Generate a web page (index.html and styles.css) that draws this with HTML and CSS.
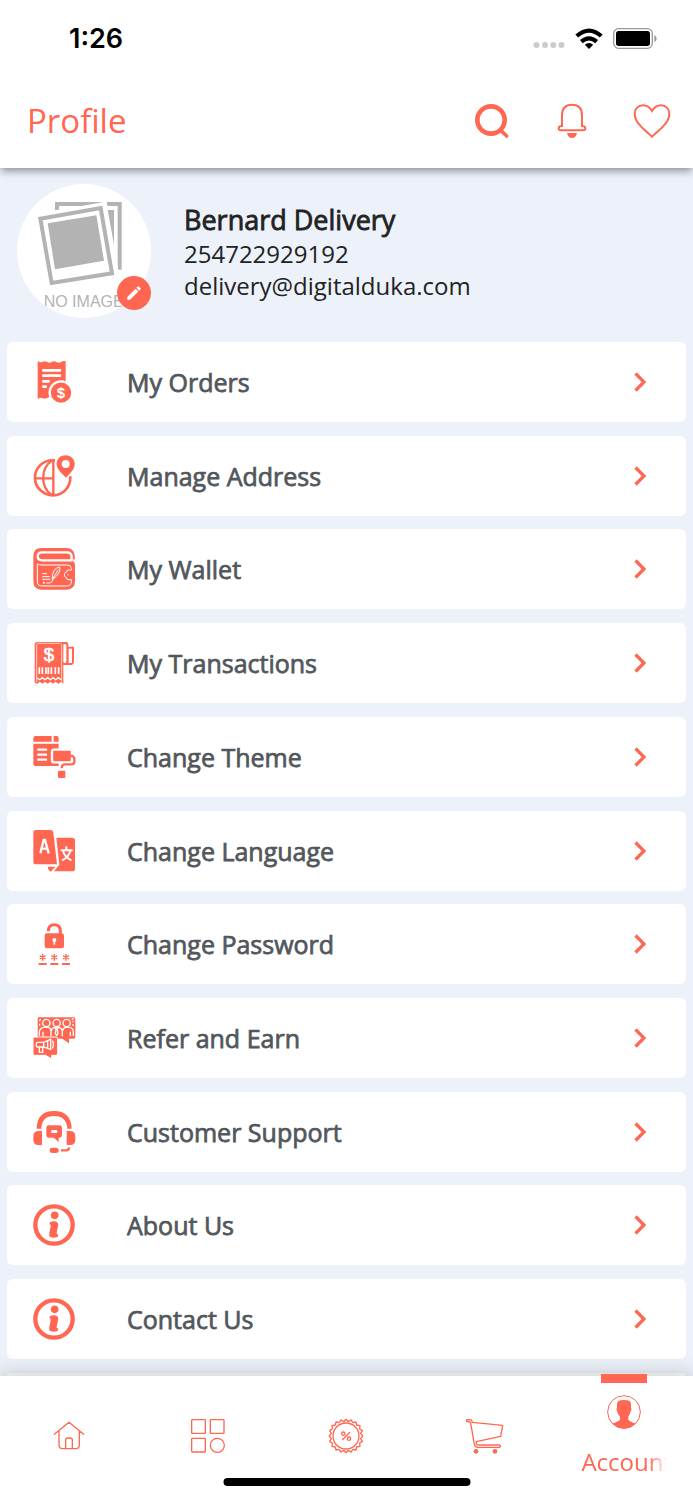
FILE: index.html
```html
<!DOCTYPE html>
<html lang="en">
<head>
  <meta charset="UTF-8" />
  <meta name="viewport" content="width=device-width, initial-scale=1.0" />
  <title>Profile</title>
  <link rel="stylesheet" href="styles.css">
</head>
<body>
  <svg class="defs" aria-hidden="true">
    <symbol id="chevron" viewBox="0 0 14 22">
      <path d="M2.5 2.5 L11 11 L2.5 19.5" fill="none" stroke="currentColor" stroke-width="3.2" />
    </symbol>
    <symbol id="info" viewBox="0 0 126 126">
      <circle cx="63" cy="63" r="56" fill="none" stroke="currentColor" stroke-width="13" />
      <circle cx="65" cy="34" r="11.5" fill="currentColor" />
      <path d="M51 54 Q66 49 74 56 Q77 59 75 67 L71 86 Q70 92 76 91 L74 99 Q60 104 52 99 Q47 96 49 88 L53 67 Q54 60 49 61 Z" fill="currentColor" />
    </symbol>
  </svg>

  <header class="top">
    <div class="status-bar">
      <span class="time">1:26</span>
      <div class="status-icons">
        <svg class="dots" viewBox="0 0 32 8"><g fill="#cbcbcb"><circle cx="3.5" cy="4" r="3" /><circle cx="12" cy="4" r="3" /><circle cx="20.300" cy="4" r="3" /><circle cx="28.500" cy="4" r="3" /></g></svg>
        <svg class="wifi" viewBox="0 0 78 60">
          <g fill="none" stroke="#000" stroke-width="12">
            <path d="M4 23 Q39 -8 74 23" />
            <path d="M17 39 Q39 20 61 39" />
          </g>
          <path d="M27 48 Q39 38 51 48 L39 60 Z" />
        </svg>
        <svg class="battery" viewBox="0 0 132 63">
          <rect x="2" y="2" width="116" height="59" rx="15" fill="none" stroke="#9a9a9a" stroke-width="4" />
          <rect x="9" y="9" width="102" height="45" rx="8" />
          <path d="M124 22 Q131 25 131 32 Q131 39 124 42 Z" fill="#9a9a9a" />
        </svg>
      </div>
    </div>
    <div class="app-bar">
      <h1>Profile</h1>
      <div class="actions">
        <button class="icon-btn" aria-label="Search">
          <svg viewBox="0 0 114 114"><g fill="none" stroke="currentColor"><circle cx="54" cy="54" r="41" stroke-width="14" /><path d="M82 84 L101 102" stroke-width="11" stroke-linecap="round" /></g></svg>
        </button>
        <button class="icon-btn" aria-label="Notifications">
          <svg viewBox="0 0 114 114"><path d="M27 72 V40 Q27 8 57 8 Q87 8 87 40 V72 Q97 72 97 79 Q97 85 90 85 H24 Q17 85 17 79 Q17 72 27 72 Z" fill="none" stroke="currentColor" stroke-width="6" /><path d="M42 93 H72 Q69 108 57 108 Q45 108 42 93 Z" fill="currentColor" /></svg>
        </button>
        <button class="icon-btn" aria-label="Favourites">
          <svg viewBox="0 0 114 114"><path d="M57 104 C40 88 5 64 5 36 C5 20 16 10 30 10 C43 10 51 17 57 27 C63 17 71 10 84 10 C98 10 109 20 109 36 C109 64 74 88 57 104 Z" fill="none" stroke="currentColor" stroke-width="6" /></svg>
        </button>
      </div>
    </div>
  </header>

  <main>
    <section class="user">
      <div class="avatar">
        <svg viewBox="0 0 402 402">
          <clipPath id="round"><circle cx="201" cy="201" r="201" /></clipPath>
          <g clip-path="url(#round)">
            <rect width="402" height="402" fill="#fff" />
            <path d="M120 78 V60 H308 V257" fill="none" stroke="#b3b3b3" stroke-width="12" />
            <path d="M63 97 L263 61 L299 271 L96 306 Z" fill="#fff" stroke="#fff" stroke-width="14" />
            <path d="M272 78 H291 V182 Z" fill="#b3b3b3" />
            <path d="M70 104 L251 72 L285 268 L104 297 Z" fill="#fff" stroke="#b3b3b3" stroke-width="12" />
            <path d="M92 118 L238 94 L261 230 L114 256 Z" fill="#b3b3b3" />
            <text x="80" y="369" class="no-image">NO IMAGE</text>
          </g>
        </svg>
        <button class="edit" aria-label="Edit photo">
          <svg viewBox="0 0 24 24"><path d="M3 17.250 V21 h3.750 L17.800 9.940 l-3.750-3.750 Z M20.700 7.040 a1 1 0 0 0 0-1.410 l-2.340-2.340 a1 1 0 0 0-1.410 0 l-1.830 1.830 3.750 3.750 Z" fill="#fff" /></svg>
        </button>
      </div>
      <div class="user-info">
        <h2>Bernard Delivery</h2>
        <p>254722929192</p>
        <p>delivery@digitalduka.com</p>
      </div>
    </section>

    <ul class="menu">
      <li><a href="#orders">
        <svg class="icon" viewBox="0 0 126 126">
          <path d="M14 0 Q21 6 28 3 Q35 -2 42 3 Q49 7 56 3 Q63 -2 70 3 Q77 7 84 3 Q91 -1 98 1 V112 Q91 116 84 112 Q77 107 70 111 Q63 116 56 111 Q49 106 42 111 Q35 116 28 111 Q21 109 14 114 Z" fill="currentColor" />
          <path d="M31 28 H81 M31 44 H81 M31 61 H47 M31 77 H38" stroke="#fff" stroke-width="8" stroke-linecap="round" />
          <circle cx="84" cy="95" r="34" fill="currentColor" stroke="#fff" stroke-width="7" />
          <text x="84" y="110" class="glyph" font-size="45">$</text>
        </svg>
        <span>My Orders</span><svg class="chevron"><use href="#chevron" /></svg>
      </a></li>
      <li><a href="#address">
        <svg class="icon" viewBox="0 0 126 126">
          <g fill="none" stroke="currentColor" stroke-width="7">
            <path d="M66 16 C25 13 5 43 6 70 C7 98 31 121 60 121 C91 121 113 97 112 64" stroke-width="8" />
            <path d="M61 16 V121 M6 70 H62 M56 17 C22 42 22 96 56 120" />
          </g>
          <path d="M99 68 C83 52 71 42 71 27 C71 11 83 1 98 1 C113 1 125 12 125 27 C125 42 114 53 99 68 Z" fill="currentColor" />
          <circle cx="98" cy="27" r="12" fill="#fff" />
        </svg>
        <span>Manage Address</span><svg class="chevron"><use href="#chevron" /></svg>
      </a></li>
      <li><a href="#wallet">
        <svg class="icon" viewBox="0 0 126 126">
          <path d="M25 0 H102 Q127 1 126 34 L118 35 Q126 44 126 52 V100 Q126 125 101 125 H25 Q1 125 1 100 V25 Q1 0 25 0 Z" fill="currentColor" />
          <path d="M116 36 V27 Q116 13 101 13 H28 Q14 13 14 25 Q14 37 28 37 H119" fill="none" stroke="#fff" stroke-width="7" />
          <rect x="20" y="19" width="88" height="11" rx="5" fill="currentColor" />
          <g fill="none" stroke="#fff" stroke-width="3">
            <path d="M13 49 V101 Q13 114 27 114 H101 Q115 114 115 101 V95 H105 Q101 95 101 89 Q94 88 94 80 Q94 73 101 72 Q101 66 107 66 H115 V61 Q114 50 101 51 H27 Q17 51 13 47" />
            <path d="M28 77 H42 M28 86 H50 M28 94 H52 M40 105 H50 Q58 105 60 92 M58 90 Q58 61 80 57 Q85 74 60 94 Q57 95 58 90 Z M60 91 L76 65" />
          </g>
          <circle cx="33" cy="104" r="3" fill="#fff" /><circle cx="105" cy="80" r="2" fill="#fff" />
        </svg>
        <span>My Wallet</span><svg class="chevron"><use href="#chevron" /></svg>
      </a></li>
      <li><a href="#transactions">
        <svg class="icon" viewBox="0 0 126 126">
          <path d="M14 0 H99 Q106 0 106 8 V14 H123 V59 Q123 70 106 69 H91 V125 L84 120 L76 125 L68 119 L60 125 L52 119 L44 125 L36 119 L28 125 L20 119 L14 125 L5 122 V9 Q5 0 14 0 Z" fill="currentColor" />
          <path d="M86 5 V120 M11 120 V8 Q12 4 18 4 H82" fill="none" stroke="#fff" stroke-width="2" />
          <path d="M12 107 L20 113 L28 107 L36 113 L44 107 L52 113 L60 107 L68 113 L76 107 L84 113" fill="none" stroke="#fff" stroke-width="4" />
          <rect x="91" y="6" width="9" height="57" rx="4" fill="#fff" />
          <rect x="107" y="20" width="10" height="43" fill="#fff" />
          <text x="48" y="57" class="glyph light" font-size="56">$</text>
          <path d="M19 76 V96 M28 76 V96 M39 76 V96 M46 76 V96 M55 76 V96 M67 76 V96 M77 76 V96" stroke="#fff" stroke-width="5" />
        </svg>
        <span>My Transactions</span><svg class="chevron"><use href="#chevron" /></svg>
      </a></li>
      <li><a href="#theme">
        <svg class="icon" viewBox="0 0 126 126">
          <path d="M7 0 H56 V17 H1 V6 Q1 0 7 0 Z M62 0 H71 Q77 0 77 6 V17 H62 Z M1 23 H77 V90 H7 Q1 90 1 84 Z" fill="currentColor" />
          <path d="M16 41 H39 M16 56 H39 M16 71 H39" stroke="#fff" stroke-width="7" stroke-linecap="round" />
          <path d="M113 60 H118 Q124 62 124 68 V77 Q124 85 115 85 H94 Q86 86 86 98" fill="none" stroke="#fff" stroke-width="19" />
          <rect x="57" y="41" width="60" height="38" rx="6" fill="currentColor" stroke="#fff" stroke-width="7" />
          <path d="M113 60 H118 Q124 62 124 68 V77 Q124 85 115 85 H94 Q86 86 86 97" fill="none" stroke="currentColor" stroke-width="7" />
          <rect x="75" y="104" width="22" height="22" rx="3" fill="currentColor" />
        </svg>
        <span>Change Theme</span><svg class="chevron"><use href="#chevron" /></svg>
      </a></li>
      <li><a href="#language">
        <svg class="icon" viewBox="0 0 126 126">
          <path d="M9 0 H52 Q60 0 61 8 L72 103 H9 Q1 103 1 95 V8 Q1 0 9 0 Z M70 23 H118 Q126 23 126 31 V116 Q126 124 118 124 H63 L79 104 Z M44 110 H67 L53 125 Q45 121 44 110 Z" fill="currentColor" />
          <path d="M22 70 L32 30 H36 L47 70 M25 56 H43" fill="none" stroke="#fff" stroke-width="7" />
          <path d="M100 49 V60 M83 61 H119 M112 62 Q107 82 87 91 M90 62 Q94 81 115 91" fill="none" stroke="#fff" stroke-width="6" />
        </svg>
        <span>Change Language</span><svg class="chevron"><use href="#chevron" /></svg>
      </a></li>
      <li><a href="#password">
        <svg class="icon" viewBox="0 0 126 126">
          <path d="M46 25 Q46 5 64 5 Q82 5 82 24 V34" fill="none" stroke="currentColor" stroke-width="9" />
          <rect x="35" y="31" width="58" height="45" rx="7" fill="currentColor" />
          <circle cx="64" cy="51" r="6" fill="#fff" /><path d="M64 52 V65" stroke="#fff" stroke-width="5" />
          <path d="M17 123 H41 M52 123 H76 M87 123 H111" stroke="currentColor" stroke-width="6" />
          <path d="M29 93 V113 M20 98 L38 108 M38 98 L20 108 M64 93 V113 M55 98 L73 108 M73 98 L55 108 M99 93 V113 M90 98 L108 108 M108 98 L90 108" stroke="currentColor" stroke-width="4" />
        </svg>
        <span>Change Password</span><svg class="chevron"><use href="#chevron" /></svg>
      </a></li>
      <li><a href="#refer">
        <svg class="icon" viewBox="0 0 126 126">
          <path d="M18 1 H122 Q127 1 127 6 V60 Q127 65 122 65 H108 V79 L88 65 H14 V5 Q14 1 18 1 Z" fill="currentColor" />
          <g fill="none" stroke="#fff" stroke-width="4">
            <path d="M19 56 V45 Q20 32 34 31 H46 Q53 32 54 42 Q57 32 65 31 H78 Q86 32 88 42 Q91 32 98 31 H108 Q121 32 121 45 V56 M54 40 V58 M88 40 V58 M30 44 V58 M112 44 V58" />
            <circle cx="40" cy="18" r="11" /><circle cx="71" cy="18" r="11" /><circle cx="101" cy="18" r="11" />
            <path d="M66 33 L71 37 L76 33 M69 37 L67 50 L71 55 L75 50 L73 37 M20 8 H24 M20 8 V13 M20 20 V26 M116 6 H122 M120 12 V16 M120 22 V27" />
          </g>
          <path d="M5 60 H68 Q74 60 74 65 V110 Q74 115 69 115 H56 V126 L38 115 H5 Q0 115 0 110 V65 Q0 60 5 60 Z" fill="currentColor" stroke="#fff" stroke-width="3" />
          <path d="M14 76 H32 L53 67 V97 L32 90 H14 Q10 90 10 86 V80 Q10 76 14 76 Z M32 76 V90 M19 91 V106 H29 V91 M58 71 Q65 82 58 94 M44 70 V95" fill="none" stroke="#fff" stroke-width="4" />
        </svg>
        <span>Refer and Earn</span><svg class="chevron"><use href="#chevron" /></svg>
      </a></li>
      <li><a href="#support">
        <svg class="icon" viewBox="0 0 126 126">
          <path d="M11 53 Q12 0 63 0 Q114 0 116 53 H103 Q101 15 63 15 Q26 15 25 53 Z M21 60 H27 V102 H17 Q1 102 1 86 V76 Q1 60 17 60 Z M101 60 H111 Q127 60 127 76 V86 Q127 102 111 102 H101 Z" fill="currentColor" />
          <path d="M47 43 H80 Q87 43 87 50 V73 Q87 80 80 80 H77 V93 L62 80 H47 Q40 80 40 73 V50 Q40 43 47 43 Z" fill="currentColor" />
          <rect x="54" y="57" width="19" height="9" rx="4" fill="#fff" />
          <rect x="50" y="110" width="27" height="16" rx="8" fill="currentColor" />
          <path d="M84 118 H98 Q108 118 109 109" fill="none" stroke="currentColor" stroke-width="7" />
        </svg>
        <span>Customer Support</span><svg class="chevron"><use href="#chevron" /></svg>
      </a></li>
      <li><a href="#about">
        <svg class="icon"><use href="#info" /></svg>
        <span>About Us</span><svg class="chevron"><use href="#chevron" /></svg>
      </a></li>
      <li><a href="#contact">
        <svg class="icon"><use href="#info" /></svg>
        <span>Contact Us</span><svg class="chevron"><use href="#chevron" /></svg>
      </a></li>
      <li class="next"></li>
    </ul>
  </main>

  <nav class="tabs">
    <a href="#home" aria-label="Home">
      <svg viewBox="0 0 114 114"><g fill="none" stroke="currentColor" stroke-width="4" stroke-linecap="round" stroke-linejoin="round"><path d="M13 52 L57 16 L101 52 M27 42 V84 Q27 95 38 95 H77 Q88 95 88 84 V42 M47 94 V69 Q47 63 53 63 H61 Q67 63 67 69 V94" /></g></svg>
    </a>
    <a href="#categories" aria-label="Categories">
      <svg viewBox="0 0 114 114"><g fill="none" stroke="currentColor" stroke-width="4"><rect x="8" y="8" width="41" height="41" rx="2" /><rect x="64" y="8" width="41" height="41" rx="2" /><rect x="8" y="64" width="41" height="41" rx="2" /><circle cx="85" cy="85" r="21" /></g></svg>
    </a>
    <a href="#offers" aria-label="Offers">
      <svg viewBox="0 0 114 114"><g fill="none" stroke="currentColor" stroke-width="4" stroke-linejoin="round"><path d="M57 7 L64 14 L72 9 L78 17 L87 15 L89 24 L99 26 L98 36 L106 41 L101 49 L107 57 L101 65 L106 73 L98 78 L99 88 L89 90 L87 99 L78 97 L72 105 L64 100 L57 107 L50 100 L42 105 L36 97 L27 99 L25 90 L15 88 L16 78 L8 73 L13 65 L7 57 L13 49 L8 41 L16 36 L15 26 L25 24 L27 15 L36 17 L42 9 L50 14 Z" /><circle cx="57" cy="57" r="39" /><path d="M46 69 L69 45" /><circle cx="49" cy="50" r="5" /><circle cx="66" cy="65" r="5" /></g></svg>
    </a>
    <a href="#cart" aria-label="Cart">
      <svg viewBox="0 0 114 114"><path d="M2 14 Q-1 9 4 8 H13 Q18 9 19 16 L110 25 L104 58 L31 74 Q30 84 37 84 H101 Q106 87 101 91 H36 Q27 91 25 82 L14 18 Q12 12 2 14 Z" fill="none" stroke="currentColor" stroke-width="4" stroke-linejoin="round" /><circle cx="30" cy="103" r="7" fill="currentColor" /><circle cx="87" cy="103" r="7" fill="currentColor" /></svg>
    </a>
    <a href="#account" class="active">
      <svg viewBox="0 0 114 114"><circle cx="57" cy="57" r="49" fill="none" stroke="currentColor" stroke-width="3" /><path d="M36 53 Q33 52 36 43 Q35 28 40 24 Q46 21 57 21 Q68 21 74 24 Q79 28 78 43 Q81 52 77 54 Q75 66 70 71 V80 Q75 87 92 91 Q78 107 57 107 Q36 107 22 91 Q39 87 45 80 V71 Q38 65 36 53 Z" fill="currentColor" /></svg>
      <span>Account</span>
    </a>
    <div class="home-indicator"></div>
  </nav>
</body>
</html>
```
FILE: styles.css
```css
* {
  box-sizing: border-box;
}

body {
  margin: 0;
  min-height: 100vh;
  display: flex;
  flex-direction: column;
  background: #edf2fa;
  color: #222;
  font-family: "Open Sans", "Noto Sans", sans-serif;
}

h1, h2, p, ul {
  margin: 0;
  padding: 0;
}

a {
  color: inherit;
  text-decoration: none;
}

svg {
  display: block;
  flex: none;
}

button {
  padding: 0;
  border: 0;
  background: none;
  color: inherit;
  cursor: pointer;
}

.defs {
  position: absolute;
  width: 0;
  height: 0;
}

.top {
  background: #fff;
  box-shadow: 0 4px 8px -1px rgba(40, 40, 60, 0.5);
}

.status-bar {
  height: 76px;
  padding: 0 36px 0 69px;
  display: flex;
  align-items: center;
  justify-content: space-between;
}

.time {
  color: #000;
  font-family: Inter, sans-serif;
  font-size: 27px;
  font-weight: 600;
}

.status-icons {
  display: flex;
  align-items: center;
  gap: 10px;
}

.dots {
  width: 32px;
  height: 8px;
  align-self: flex-end;
}

.wifi {
  width: 28px;
  height: 21px;
}

.battery {
  width: 44px;
  height: 21px;
}

.app-bar {
  height: 92px;
  padding: 0 22px 3px 27px;
  display: flex;
  align-items: center;
  justify-content: space-between;
  color: #ff6752;
}

.app-bar h1 {
  font-size: 33px;
  font-weight: 400;
}

.actions {
  display: flex;
  gap: 42px;
}

.icon-btn svg {
  width: 38px;
  height: 38px;
}

main {
  flex: 1;
  display: flex;
  flex-direction: column;
}

.user {
  display: flex;
  align-items: center;
  gap: 33px;
  padding: 16px 17px 24px;
}

.avatar {
  position: relative;
  width: 134px;
}

.no-image {
  font-family: "Liberation Sans", Arial, sans-serif;
  font-size: 48px;
  fill: #b3b3b3;
}

.edit {
  position: absolute;
  right: 0;
  bottom: 8px;
  width: 34px;
  height: 34px;
  display: flex;
  align-items: center;
  justify-content: center;
  border-radius: 50%;
  background: #ff6752;
}

.edit svg {
  width: 18px;
  height: 18px;
}

.user-info {
  padding-top: 2px;
  font-size: 24px;
  line-height: 32px;
}

.user-info h2 {
  font-size: 27px;
  font-weight: 400;
  line-height: 36px;
  -webkit-text-stroke: 0.03em #222;
}

.menu {
  flex: 1;
  display: flex;
  flex-direction: column;
  justify-content: space-between;
  padding: 0 7px;
  list-style: none;
}

.menu li {
  border-radius: 6px;
  background: #fff;
}

.menu a {
  height: 80px;
  padding: 0 39px 0 26px;
  display: flex;
  align-items: center;
  color: #ff6752;
}

.menu span {
  flex: 1;
  padding-left: 52px;
  color: #52575c;
  font-size: 25px;
  -webkit-text-stroke: 0.03em #52575c;
}

.menu .next {
  height: 3px;
  border-radius: 6px 6px 0 0;
}

.icon {
  width: 42px;
  height: 42px;
  overflow: visible;
}

.glyph {
  fill: #fff;
  font-family: "Liberation Sans", Arial, sans-serif;
  font-weight: 700;
  text-anchor: middle;
}

.glyph.light {
  font-weight: 400;
  stroke: #fff;
  stroke-width: 2px;
}

.chevron {
  width: 14px;
  height: 22px;
}

.tabs {
  position: sticky;
  bottom: 0;
  height: 124px;
  display: grid;
  grid-template-columns: repeat(5, 1fr);
  background: #fff;
  box-shadow: 0 0 20px rgba(0, 0, 0, 0.25);
  color: #ff6752;
}

.tabs a {
  display: flex;
  flex-direction: column;
  align-items: center;
  justify-content: center;
  padding-bottom: 4px;
}

.tabs svg {
  width: 38px;
  height: 38px;
}

.tabs .active {
  position: relative;
  justify-content: flex-start;
  gap: 15px;
  padding-top: 17px;
}

.active::before {
  content: "";
  position: absolute;
  top: -2px;
  width: 46px;
  height: 9px;
  background: #ff6752;
}

/* label fades out at its right edge */
.active span {
  padding-left: 6px;
  font-size: 24px;
  line-height: 32px;
  white-space: nowrap;
  -webkit-mask-image: linear-gradient(to right, #000 76%, transparent 95%);
  mask-image: linear-gradient(to right, #000 76%, transparent 95%);
}

.home-indicator {
  position: absolute;
  left: 50%;
  bottom: 14px;
  width: 247px;
  height: 8px;
  border-radius: 4px;
  background: #000;
  transform: translateX(-50%);
}
```
